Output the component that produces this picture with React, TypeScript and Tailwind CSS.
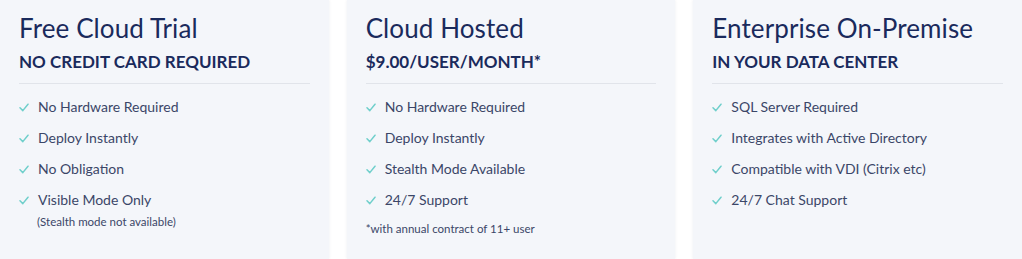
import React from "react";

const Check = () => (
  <svg width="10" height="9" viewBox="0 0 10 9" className="shrink-0">
    <path d="M1 4.8 L3.8 7.6 L9 1.2" fill="none" stroke="#6fcfcb" strokeWidth="1.5" strokeLinecap="round" strokeLinejoin="round" />
  </svg>
);

type Card = { title: string; sub: string; items: string[]; note?: string; footnote?: string };

const cards: Card[] = [
  {
    title: "Free Cloud Trial",
    sub: "NO CREDIT CARD REQUIRED",
    items: ["No Hardware Required", "Deploy Instantly", "No Obligation", "Visible Mode Only"],
    note: "(Stealth mode not available)",
  },
  {
    title: "Cloud Hosted",
    sub: "$9.00/USER/MONTH*",
    items: ["No Hardware Required", "Deploy Instantly", "Stealth Mode Available", "24/7 Support"],
    footnote: "*with annual contract of 11+ user",
  },
  {
    title: "Enterprise On-Premise",
    sub: "IN YOUR DATA CENTER",
    items: ["SQL Server Required", "Integrates with Active Directory", "Compatible with VDI (Citrix etc)", "24/7 Chat Support"],
  },
];

export default function App() {
  return (
    <div className="w-[1022px] h-[259px] bg-white overflow-hidden grid grid-cols-3 gap-[18px]" style={{ fontFamily: "Lato, 'Open Sans', sans-serif" }}>
      {cards.map((c) => (
        <div key={c.title} className="h-[259px] bg-[#f4f6fa] shadow-[0_0_3px_rgba(30,40,80,0.08)] px-[19px]">
          <h2 className="text-[26px] leading-[30px] text-[#1a2a5c] pt-[13px] tracking-[0.1px]">{c.title}</h2>
          <div className="text-[17px] leading-[20px] font-bold text-[#1a2a5c] mt-[9px]">{c.sub}</div>
          <div className="h-px bg-[#e1e4ea] mt-[11px]" />
          <ul className="mt-[14px] flex flex-col gap-[13px]">
            {c.items.map((it) => (
              <li key={it} className="flex items-center gap-[9px] text-[14px] leading-[18px] text-[#3b4668]">
                <Check />
                <span>{it}</span>
              </li>
            ))}
          </ul>
          {c.note && <div className="ml-[18px] mt-[6px] text-[11.5px] leading-[14px] text-[#3b4668]">{c.note}</div>}
          {c.footnote && <div className="mt-[13px] text-[11.5px] leading-[14px] text-[#3b4668]">{c.footnote}</div>}
        </div>
      ))}
    </div>
  );
}
